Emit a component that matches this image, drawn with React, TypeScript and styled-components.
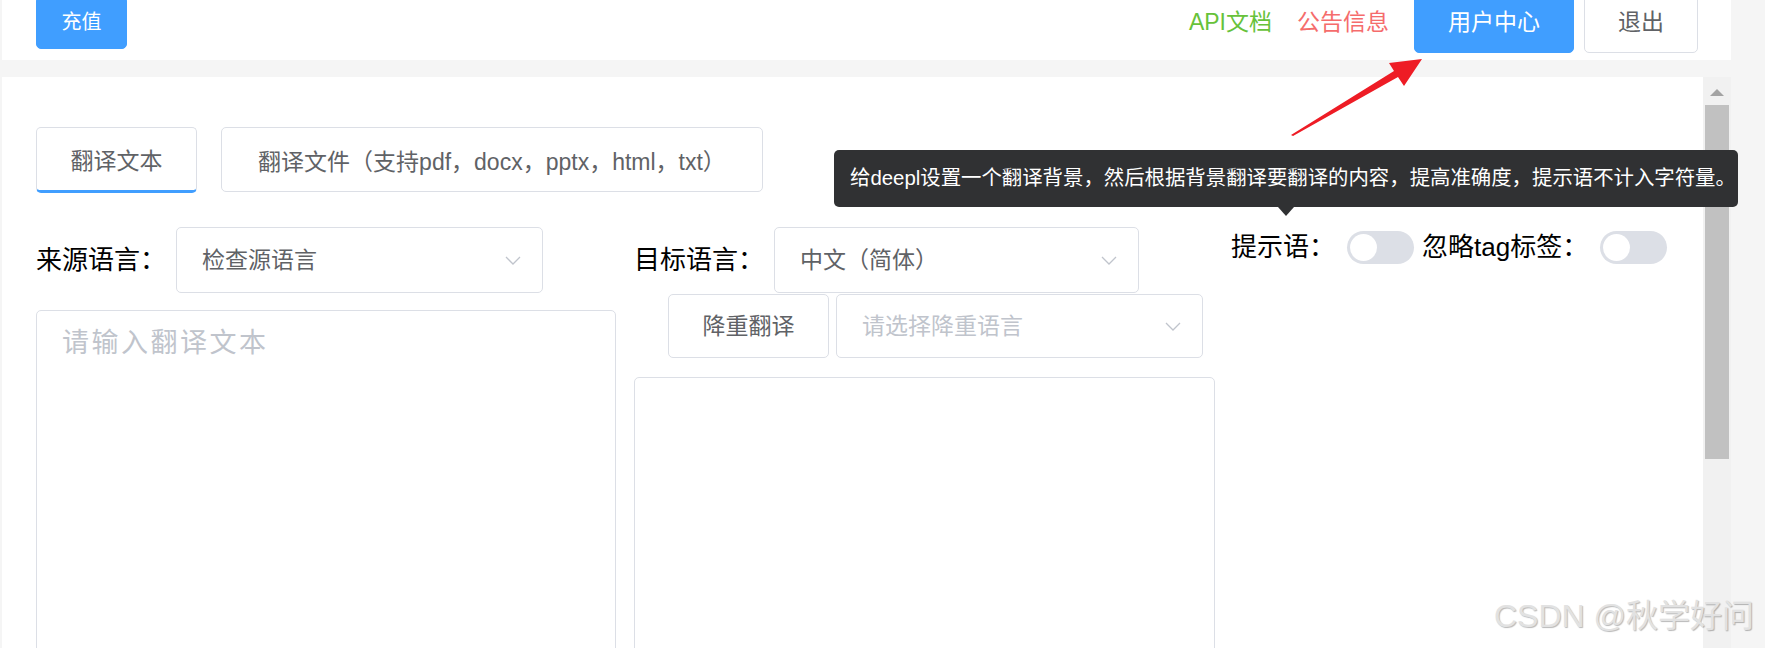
import React from "react";
import styled, { createGlobalStyle } from "styled-components";

const GlobalStyle = createGlobalStyle`
  html, body {
    margin: 0;
    padding: 0;
    background: #f5f5f5;
  }
  body {
    font-family: "Liberation Sans", "Noto Sans CJK SC", sans-serif;
  }
  * { box-sizing: border-box; }
`;

const FONT = `"Liberation Sans", "Noto Sans CJK SC", sans-serif`;

const Page = styled.div`
  position: relative;
  width: 1765px;
  height: 648px;
  overflow: hidden;
  background: #f5f5f5;
  padding-left: 2px;
  font-family: ${FONT};
`;

const Header = styled.header`
  width: 1729px;
  height: 60px;
  padding: 0 33px 16px 34px;
  background: #fff;
  display: flex;
  align-items: center;
`;

const Spacer = styled.div`
  flex: 1;
`;

const HeaderButton = styled.button<{ $primary?: boolean; $small?: boolean }>`
  flex-shrink: 0;
  height: ${(p) => (p.$small ? 53 : 62)}px;
  padding: 0 ${(p) => (p.$small ? 24.5 : 33)}px;
  border-radius: 5px;
  border: 1px solid ${(p) => (p.$primary ? "#409eff" : "#dcdfe6")};
  background: ${(p) => (p.$primary ? "#409eff" : "#fff")};
  color: ${(p) => (p.$primary ? "#fff" : "#606266")};
  font-family: ${FONT};
  font-size: ${(p) => (p.$small ? 20 : 23)}px;
  line-height: 1;
  display: flex;
  align-items: center;
  justify-content: center;
  & + & {
    margin-left: 10px;
  }
`;

const HeaderLink = styled.a<{ $color: string }>`
  color: ${(p) => p.$color};
  font-size: 23px;
  line-height: 1;
  text-decoration: none;
  margin-right: 25px;
  white-space: nowrap;
`;

const Main = styled.div`
  display: flex;
  width: 1729px;
  height: 571px;
  margin-top: 17px;
  background: #fff;
`;

const Panel = styled.div`
  position: relative;
  flex: 1;
  padding: 50px 0 0 34px;
`;

const Tabs = styled.div`
  display: flex;
  align-items: flex-start;
  gap: 24px;
`;

const Tab = styled.div<{ $active?: boolean; $width: number }>`
  width: ${(p) => p.$width}px;
  height: ${(p) => (p.$active ? 66 : 65)}px;
  border: 1px solid #dcdfe6;
  border-radius: 5px;
  ${(p) => (p.$active ? "border-bottom: 3px solid #409eff;" : "")}
  display: flex;
  align-items: center;
  justify-content: center;
  font-size: 23px;
  color: #606266;
  white-space: nowrap;
`;

const Workspace = styled.div`
  display: flex;
  align-items: flex-start;
  margin-top: 34px;
`;

const Column = styled.div<{ $width: number; $offset?: number }>`
  width: ${(p) => p.$width}px;
  margin-left: ${(p) => p.$offset ?? 0}px;
  display: flex;
  flex-direction: column;
  flex-shrink: 0;
`;

const LangRow = styled.div`
  display: flex;
  align-items: center;
  height: 66px;
`;

const Label = styled.span`
  font-size: 26px;
  color: #000;
  white-space: nowrap;
  margin-right: 10px;
  line-height: 1;
`;

const Select = styled.div<{ $width: number; $height?: number }>`
  width: ${(p) => p.$width}px;
  height: ${(p) => p.$height ?? 66}px;
  border: 1px solid #dcdfe6;
  border-radius: 5px;
  display: flex;
  align-items: center;
  padding: 0 21px 0 25px;
  flex-shrink: 0;
`;

const SelectText = styled.span<{ $placeholder?: boolean }>`
  flex: 1;
  font-size: 23px;
  line-height: 1;
  color: ${(p) => (p.$placeholder ? "#c0c4cc" : "#606266")};
  white-space: nowrap;
`;

const SubRow = styled.div`
  display: flex;
  align-items: center;
  gap: 7px;
  margin: 1px 0 0 34px;
`;

const PlainButton = styled.button`
  width: 161px;
  height: 64px;
  border: 1px solid #dcdfe6;
  border-radius: 5px;
  background: #fff;
  color: #606266;
  font-family: ${FONT};
  font-size: 23px;
  line-height: 1;
  flex-shrink: 0;
`;

const TextArea = styled.textarea<{ $gap: number }>`
  display: block;
  width: 100%;
  height: 380px;
  margin-top: ${(p) => p.$gap}px;
  border: 1px solid #dcdfe6;
  border-radius: 5px;
  padding: 13px 20px 0 25px;
  resize: none;
  outline: none;
  font-family: ${FONT};
  font-size: 27px;
  letter-spacing: 2.5px;
  line-height: 38px;
  color: #606266;
  background: #fff;
  &::placeholder {
    color: #c0c4cc;
  }
`;

const Options = styled.div`
  display: flex;
  align-items: center;
  height: 40px;
  margin-left: 16px;
`;

const OptionLabel = styled.span`
  font-size: 26px;
  color: #000;
  line-height: 1;
  white-space: nowrap;
  margin-right: 12px;
`;

const Switch = styled.span`
  position: relative;
  display: inline-block;
  flex-shrink: 0;
  width: 67px;
  height: 33px;
  border-radius: 17px;
  background: #dcdfe6;
  margin-right: 8px;
  &::after {
    content: "";
    position: absolute;
    left: 3px;
    top: 3px;
    width: 27px;
    height: 27px;
    border-radius: 50%;
    background: #fff;
  }
`;

const Tooltip = styled.div`
  position: absolute;
  left: 832px;
  top: 73px;
  z-index: 10;
  width: 904px;
  height: 57px;
  padding-left: 16px;
  background: #303133;
  border-radius: 5px;
  color: #fff;
  font-size: 20.4px;
  line-height: 57px;
  white-space: nowrap;
  &::after {
    content: "";
    position: absolute;
    left: 444px;
    bottom: -9px;
    border-top: 9px solid #303133;
    border-left: 8.5px solid transparent;
    border-right: 8.5px solid transparent;
  }
`;

const ScrollTrack = styled.div`
  width: 28px;
  flex-shrink: 0;
  background: #f1f1f1;
  display: flex;
  flex-direction: column;
  align-items: center;
`;

const ScrollArrow = styled.div`
  margin-top: 11.5px;
  width: 0;
  height: 0;
  border-left: 7px solid transparent;
  border-right: 7px solid transparent;
  border-bottom: 7px solid #a3a3a3;
`;

const ScrollThumb = styled.div`
  margin-top: 9.5px;
  width: 24px;
  height: 354px;
  background: #c1c1c1;
`;

const Watermark = styled.div`
  position: absolute;
  left: 1494px;
  top: 597px;
  font-family: ${FONT};
  font-size: 32px;
  line-height: 1.2;
  color: #e2e2e2;
  text-shadow: 1px 1px 1px rgba(0, 0, 0, 0.28);
  white-space: nowrap;
  pointer-events: none;
`;

const Annotation = styled.svg`
  position: absolute;
  left: 0;
  top: 0;
  z-index: 20;
  pointer-events: none;
`;

const Chevron = () => (
  <svg width="16" height="9" viewBox="0 0 16 9">
    <polyline points="1,1 8,8 15,1" fill="none" stroke="#c0c4cc" strokeWidth="1.3" />
  </svg>
);

export default function App() {
  return (
    <>
      <GlobalStyle />
      <Page>
        <Header>
          <HeaderButton $primary $small>充值</HeaderButton>
          <Spacer />
          <HeaderLink $color="#67c23a">API文档</HeaderLink>
          <HeaderLink $color="#f56c6c">公告信息</HeaderLink>
          <HeaderButton $primary>用户中心</HeaderButton>
          <HeaderButton>退出</HeaderButton>
        </Header>
        <Main>
          <Panel>
            <Tabs>
              <Tab $active $width={161}>翻译文本</Tab>
              <Tab $width={542}>翻译文件（支持pdf，docx，pptx，html，txt）</Tab>
            </Tabs>
            <Tooltip>给deepl设置一个翻译背景，然后根据背景翻译要翻译的内容，提高准确度，提示语不计入字符量。</Tooltip>
            <Workspace>
              <Column $width={580}>
                <LangRow>
                  <Label>来源语言：</Label>
                  <Select $width={367}>
                    <SelectText>检查源语言</SelectText>
                    <Chevron />
                  </Select>
                </LangRow>
                <TextArea $gap={17} placeholder="请输入翻译文本" />
              </Column>
              <Column $width={581} $offset={18}>
                <LangRow>
                  <Label>目标语言：</Label>
                  <Select $width={365}>
                    <SelectText>中文（简体）</SelectText>
                    <Chevron />
                  </Select>
                </LangRow>
                <SubRow>
                  <PlainButton>降重翻译</PlainButton>
                  <Select $width={367} $height={64}>
                    <SelectText $placeholder>请选择降重语言</SelectText>
                    <Chevron />
                  </Select>
                </SubRow>
                <TextArea $gap={19} />
              </Column>
              <Options>
                <OptionLabel>提示语：</OptionLabel>
                <Switch />
                <OptionLabel>忽略tag标签：</OptionLabel>
                <Switch />
              </Options>
            </Workspace>
          </Panel>
          <ScrollTrack>
            <ScrollArrow />
            <ScrollThumb />
          </ScrollTrack>
        </Main>
        <Watermark>CSDN @秋学好问</Watermark>
        <Annotation width="1765" height="648" viewBox="0 0 1765 648">
          <polygon
            points="1291,135 1394,71 1389,63 1422,59 1404,86 1398,77 1293,136"
            fill="#ee1c25"
          />
        </Annotation>
      </Page>
    </>
  );
}
